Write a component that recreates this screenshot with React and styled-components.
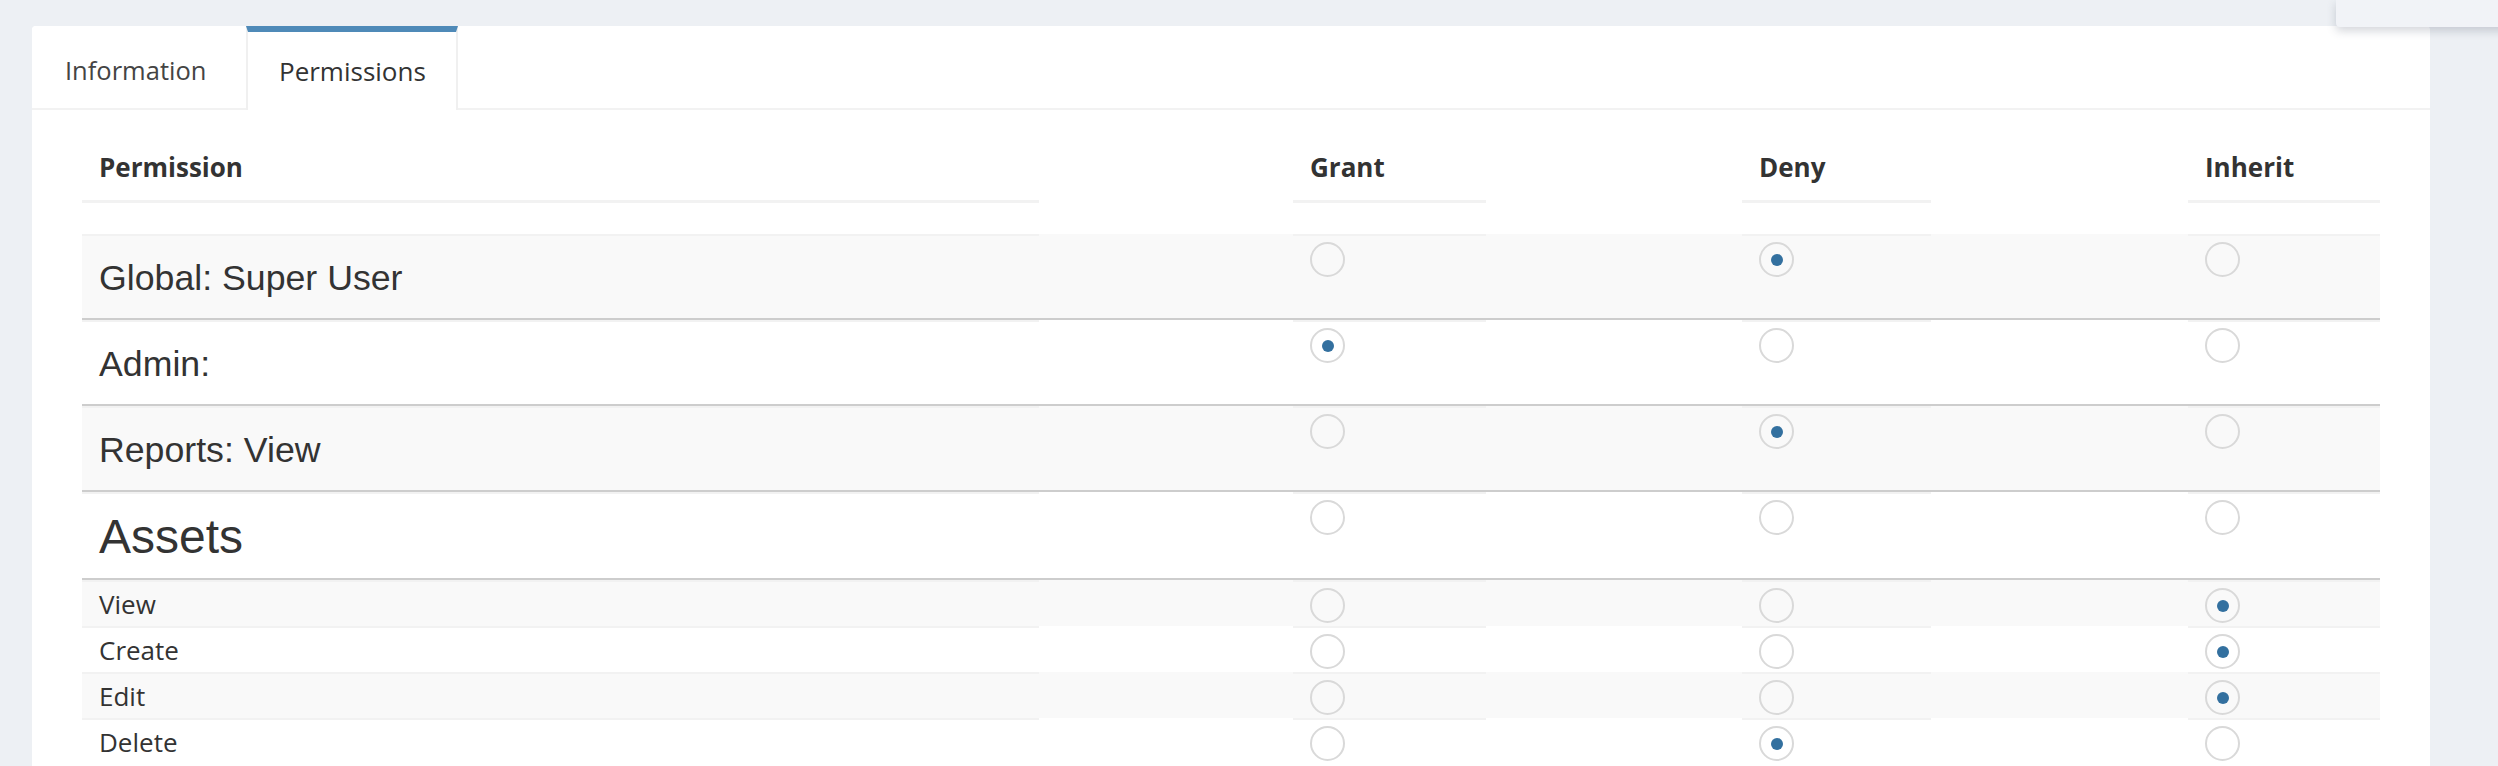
import React from "react";
import styled, { createGlobalStyle } from "styled-components";

const GlobalStyle = createGlobalStyle`
  html, body {
    margin: 0;
    padding: 0;
    background: #edf0f4;
  }
  body {
    font-family: "Open Sans", "Liberation Sans", sans-serif;
    color: #333;
    overflow: hidden;
  }
`;

const Page = styled.div`
  position: relative;
  height: 766px;
  box-sizing: border-box;
  padding: 26px 68px 0 32px;
`;

// little menu peeking in from the top right corner
const CornerMenu = styled.div`
  position: absolute;
  top: 0;
  left: 2336px;
  width: 200px;
  height: 27px;
  background: #f1f3f7;
  border-radius: 0 0 0 4px;
  box-shadow: 0 4px 10px rgba(60, 70, 90, 0.22);
  z-index: 2;
`;

const Card = styled.div`
  background: #fff;
  border-radius: 4px 4px 0 0;
  height: 740px;
  overflow: hidden;
`;

const TabBar = styled.div`
  display: flex;
  height: 84px;
  box-sizing: border-box;
  border-bottom: 2px solid #f2f2f2;
`;

const Tab = styled.div`
  display: flex;
  align-items: center;
  box-sizing: border-box;
  width: ${(p) => p.$width}px;
  height: ${(p) => (p.$active ? 84 : 82)}px;
  padding: 0 31px;
  border-top: 6px solid ${(p) => (p.$active ? "#4f8ab8" : "transparent")};
  border-left: 2px solid ${(p) => (p.$active ? "#f0f0f0" : "transparent")};
  border-right: 2px solid ${(p) => (p.$active ? "#f0f0f0" : "transparent")};
  background: #fff;
  font-size: ${(p) => (p.$active ? 26 : 25.5)}px;
  color: ${(p) => (p.$active ? "#333" : "#444")};
  white-space: nowrap;
`;

const TableWrap = styled.div`
  padding: 0 50px;
`;

const Row = styled.div`
  display: grid;
  grid-template-columns: 957px 254px 193px 256px 189px 257px 192px;
  background: ${(p) => (p.$striped ? "#f9f9f9" : "#fff")};
  border-bottom: ${(p) => (p.$ruled ? "2px solid #cdcdcd" : "none")};
`;

const HeadCell = styled.div`
  padding: 39px 17px 15px;
  line-height: 36px;
  font-size: 26px;
  font-weight: 700;
  color: #333;
  border-bottom: 3px solid #f2f2f2;
`;

const Gap = styled.div``;

const Body = styled.div`
  margin-top: 31px;
`;

const labelSizes = {
  group: { font: "35.7px", line: "42px", pad: "21px 17px 19px" },
  section: { font: "48px", line: "56px", pad: "15px 17px 13px" },
  item: { font: "26px", line: "36px", pad: "4px 17px" },
};

const Label = styled.div`
  border-top: 2px solid #f2f2f2;
  padding: ${(p) => labelSizes[p.$kind].pad};
  font-family: ${(p) =>
    p.$kind === "item"
      ? '"Open Sans", sans-serif'
      : '"Liberation Sans", Arial, sans-serif'};
  font-size: ${(p) => labelSizes[p.$kind].font};
  line-height: ${(p) => labelSizes[p.$kind].line};
  color: #333;
`;

const ChoiceCell = styled.div`
  border-top: 2px solid #f2f2f2;
  padding: 6px 17px 3px;
`;

const Radio = styled.span`
  display: flex;
  align-items: center;
  justify-content: center;
  width: 35px;
  height: 35px;
  box-sizing: border-box;
  border: 2px solid #d9d9d9;
  border-radius: 50%;

  &::after {
    content: "";
    display: ${(p) => (p.$checked ? "block" : "none")};
    width: 12px;
    height: 12px;
    border-radius: 50%;
    background: #33709f;
  }
`;

const columns = ["grant", "deny", "inherit"];

const permissions = [
  { label: "Global: Super User", kind: "group", value: "deny" },
  { label: "Admin:", kind: "group", value: "grant" },
  { label: "Reports: View", kind: "group", value: "deny" },
  { label: "Assets", kind: "section", value: null },
  { label: "View", kind: "item", value: "inherit" },
  { label: "Create", kind: "item", value: "inherit" },
  { label: "Edit", kind: "item", value: "inherit" },
  { label: "Delete", kind: "item", value: "deny" },
];

const PermissionRow = ({ perm, striped }) => (
  <Row $striped={striped} $ruled={perm.kind !== "item"}>
    <Label $kind={perm.kind}>{perm.label}</Label>
    {columns.map((col) => (
      <React.Fragment key={col}>
        <Gap />
        <ChoiceCell>
          <Radio $checked={perm.value === col} />
        </ChoiceCell>
      </React.Fragment>
    ))}
  </Row>
);

const App = () => {
  return (
    <>
      <GlobalStyle />
      <Page>
        <CornerMenu />
        <Card>
          <TabBar>
            <Tab $width={214}>Information</Tab>
            <Tab $width={212} $active>
              Permissions
            </Tab>
          </TabBar>
          <TableWrap>
            <Row>
              <HeadCell>Permission</HeadCell>
              <Gap />
              <HeadCell>Grant</HeadCell>
              <Gap />
              <HeadCell>Deny</HeadCell>
              <Gap />
              <HeadCell>Inherit</HeadCell>
            </Row>
            <Body>
              {permissions.map((perm, i) => (
                <PermissionRow key={perm.label} perm={perm} striped={i % 2 === 0} />
              ))}
            </Body>
          </TableWrap>
        </Card>
      </Page>
    </>
  );
};

export default App;
